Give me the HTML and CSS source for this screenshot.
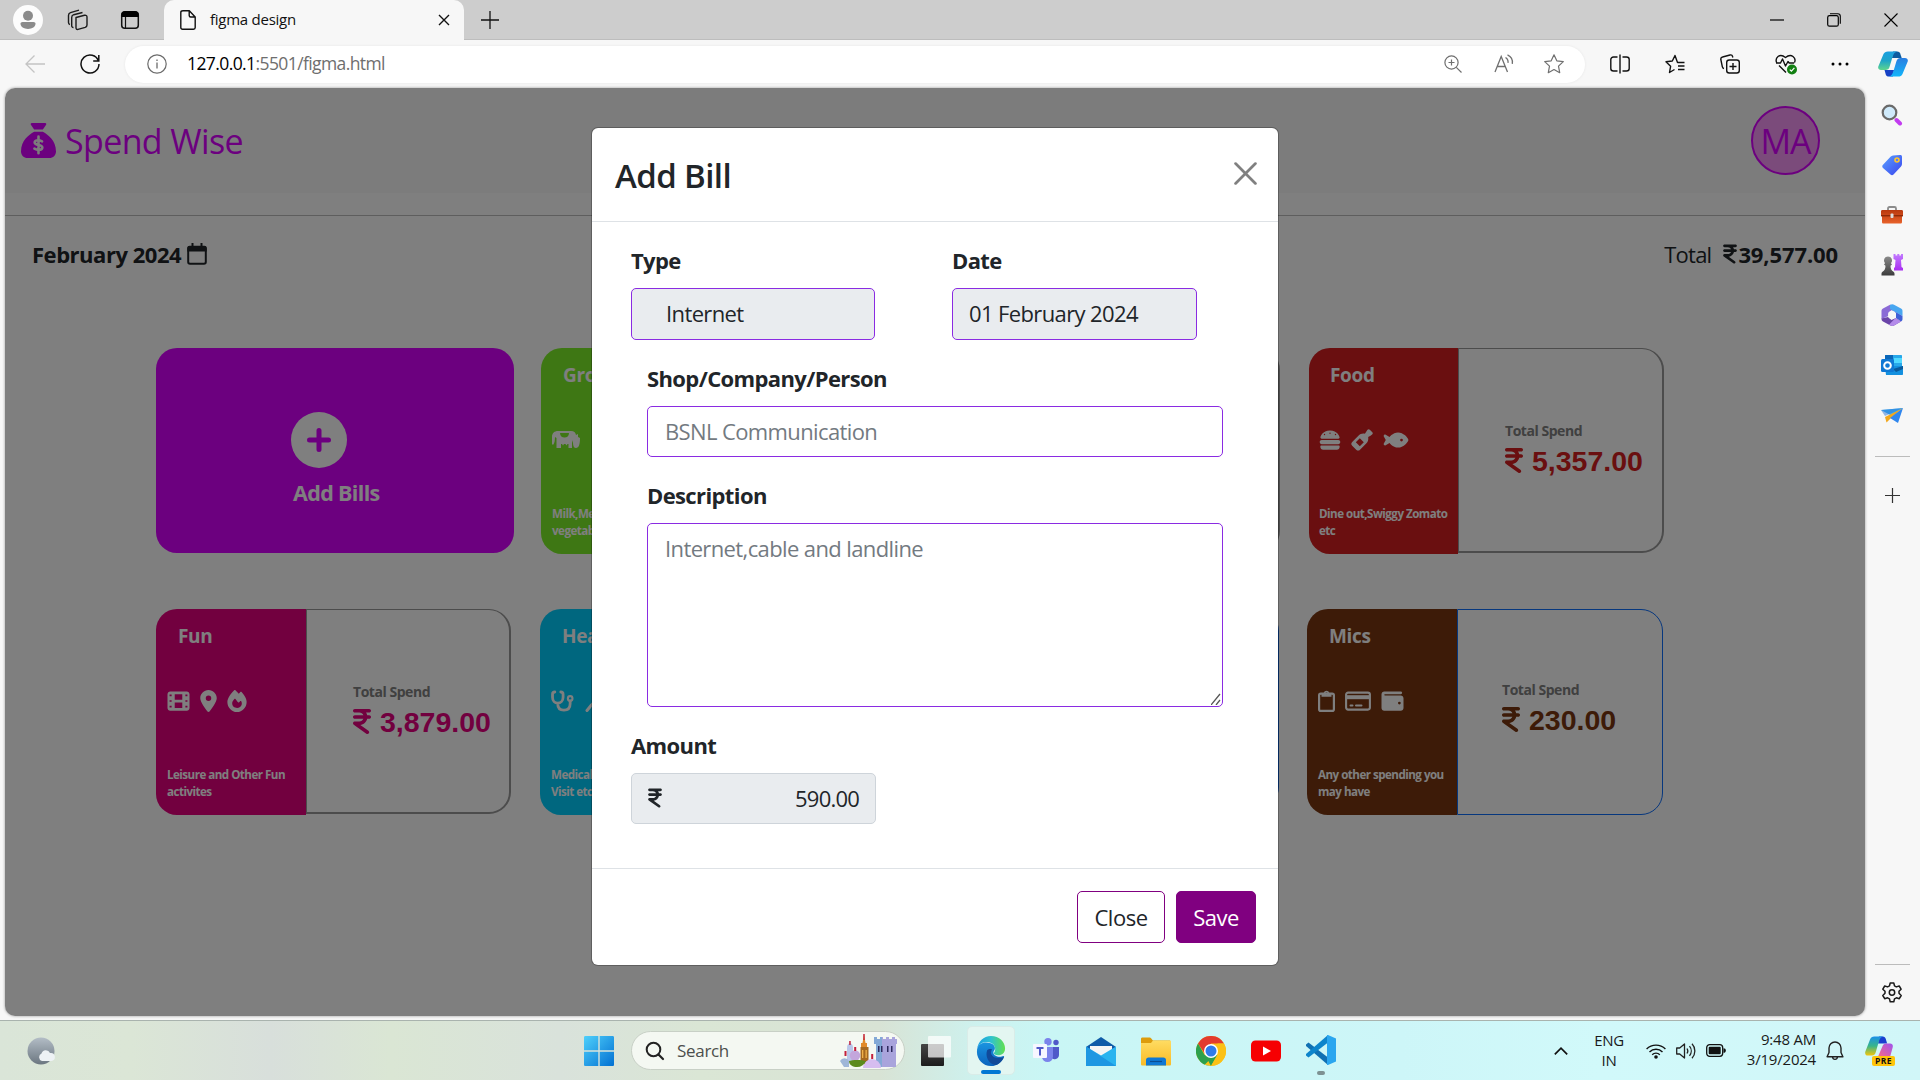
FILE: index.html
```html
<!DOCTYPE html>
<html lang="en">
<head>
<meta charset="utf-8">
<title>figma design</title>
<link rel="stylesheet" href="styles.css">
</head>
<body>
<svg class="defs" width="0" height="0">
  <defs>
    <symbol id="rupee" viewBox="0 0 320 512"><path fill="currentColor" d="M0 64C0 46.3 14.3 32 32 32H96h16H288c17.7 0 32 14.3 32 32s-14.3 32-32 32H231.8c9.6 14.4 16.7 30.6 20.7 48H288c17.7 0 32 14.3 32 32s-14.3 32-32 32H252.4c-13.2 58.3-61.9 103.2-122.2 110.9L274.6 422c14.4 10.3 17.7 30.3 7.4 44.6s-30.3 17.7-44.6 7.4L13.4 314C2.1 306-2.7 291.5 1.5 278.2S18.1 256 32 256h80c32.8 0 61-19.7 73.3-48H32c-17.7 0-32-14.3-32-32s14.3-32 32-32H185.3C173 115.7 144.8 96 112 96H96 32C14.3 96 0 81.7 0 64z"/></symbol>
    <linearGradient id="cpA" x1="0" y1="0" x2="0" y2="1"><stop offset="0" stop-color="#1a9fe0"/><stop offset=".5" stop-color="#1fa5c9"/><stop offset="1" stop-color="#5fd68c"/></linearGradient>
    <linearGradient id="cpB" x1="0" y1="0" x2="0" y2="1"><stop offset="0" stop-color="#2a7de0"/><stop offset="1" stop-color="#12b5fa"/></linearGradient>
    <linearGradient id="cpC" x1="0" y1="0" x2="0" y2="1"><stop offset="0" stop-color="#1a8fe8"/><stop offset=".5" stop-color="#37b58a"/><stop offset="1" stop-color="#f5c60a"/></linearGradient>
    <linearGradient id="cpD" x1="1" y1="0" x2="0" y2="1"><stop offset="0" stop-color="#a052ee"/><stop offset="1" stop-color="#f56a8a"/></linearGradient>
    <linearGradient id="tag" x1="0" y1="0" x2="1" y2="1"><stop offset="0" stop-color="#5aa2ff"/><stop offset="1" stop-color="#3a43ee"/></linearGradient>
    <linearGradient id="box" x1="0" y1="0" x2="0" y2="1"><stop offset="0" stop-color="#b9380e"/><stop offset="1" stop-color="#e8622a"/></linearGradient>
    <linearGradient id="pawn" x1="0" y1="0" x2="0" y2="1"><stop offset="0" stop-color="#8a8a8a"/><stop offset="1" stop-color="#3c3c3c"/></linearGradient>
    <linearGradient id="rook" x1="0" y1="0" x2="0" y2="1"><stop offset="0" stop-color="#c27bff"/><stop offset="1" stop-color="#a82df0"/></linearGradient>
    <linearGradient id="win" x1="0" y1="0" x2="1" y2="1"><stop offset="0" stop-color="#4fd0fb"/><stop offset="1" stop-color="#0270d2"/></linearGradient>
    <linearGradient id="moon" x1="0" y1="0" x2="0" y2="1"><stop offset="0" stop-color="#b3bdc6"/><stop offset="1" stop-color="#6b7680"/></linearGradient>
    <linearGradient id="edgeA" x1="0" y1="0" x2="1" y2="0"><stop offset="0" stop-color="#1b9de2"/><stop offset=".5" stop-color="#2fc2cf"/><stop offset="1" stop-color="#62e04e"/></linearGradient>
    <linearGradient id="edgeB" x1="0" y1="0" x2="0" y2="1"><stop offset="0" stop-color="#1a94e0"/><stop offset="1" stop-color="#0b63bd"/></linearGradient>
    <linearGradient id="folder" x1="0" y1="0" x2="0" y2="1"><stop offset="0" stop-color="#ffdc62"/><stop offset="1" stop-color="#f9bb26"/></linearGradient>
    <linearGradient id="dark" x1="0" y1="0" x2="0" y2="1"><stop offset="0" stop-color="#454545"/><stop offset="1" stop-color="#1c1c1c"/></linearGradient>
  </defs>
</svg>

<header class="tabstrip">
  <svg class="avatar" viewBox="0 0 30 30"><circle cx="15" cy="15" r="15" fill="#fcfcfc"/><circle cx="15" cy="10.700" r="5" fill="#8b8b8b"/><path fill="#8b8b8b" d="M9.500 17h11c1.200 0 2 .8 2 1.800 0 3-3.300 5.200-7.500 5.200S7.500 21.800 7.500 18.800c0-1 .8-1.800 2-1.800z"/></svg>
  <svg class="ico workspaces" viewBox="0 0 22 22"><g fill="none" stroke="#1c1c1c" stroke-width="1.400" stroke-linejoin="round"><path d="M9 8.500l8.500-2.200c1.300-.3 2.500.3 2.500 1.700v8c0 1.200-.7 2-1.800 2.400l-7.200 2c-1.300.3-2-.4-2-1.600z"/><path d="M6.500 18.500c-1 .1-1.800-.6-1.800-1.800V8.500c0-1.500.6-2.400 2-2.800L15.500 3.500"/><path d="M3 15.500c-.9-.2-1.500-.9-1.500-2V6.500c0-1.500.6-2.500 2-2.900L12 1.200"/></g></svg>
  <svg class="ico tabact" viewBox="0 0 20 20"><rect x="1.700" y="2" width="16.600" height="16.300" rx="3" fill="none" stroke="#111" stroke-width="1.500"/><path fill="#000" d="M1.500 7V4.500A3.500 3.500 0 0 1 5 1h10a3.500 3.500 0 0 1 3.500 3.500V7z"/><path d="M5.500 7v11" stroke="#111" stroke-width="1.200"/></svg>
  <div class="tab">
    <svg class="file" viewBox="0 0 16 20"><path fill="none" stroke="#111" stroke-width="1.400" stroke-linejoin="round" d="M3 .8h6.300L15.200 7v10.500c0 1-.7 1.700-1.700 1.700H2.500c-1 0-1.700-.7-1.700-1.700v-15C.8 1.500 1.500.8 3 .8zM9.200.8v4.700c0 1 .5 1.500 1.500 1.500h4.500"/></svg>
    <span class="tab-title">figma design</span>
    <svg class="tab-x" viewBox="0 0 12 12"><path stroke="#111" stroke-width="1.400" d="M1 1l10 10M11 1L1 11"/></svg>
  </div>
  <svg class="newtab" viewBox="0 0 18 18"><path stroke="#111" stroke-width="1.300" d="M9 0v18M0 9h18"/></svg>
  <div class="win">
    <svg viewBox="0 0 14 14"><path stroke="#000" stroke-width="1.200" d="M0 7h14"/></svg>
    <svg viewBox="0 0 14 14"><rect x=".7" y="2.600" width="10.600" height="10.600" rx="1.800" fill="none" stroke="#000" stroke-width="1.200"/><path fill="none" stroke="#000" stroke-width="1.100" d="M3 .7h7.800c1.500 0 2.500 1 2.500 2.500v7.500"/></svg>
    <svg viewBox="0 0 14 14"><path stroke="#000" stroke-width="1.100" d="M.5.500l13 13M13.500.500l-13 13"/></svg>
  </div>
</header>

<nav class="toolbar">
  <svg class="i20" viewBox="0 0 20 20"><path fill="none" stroke="#c4c4c4" stroke-width="1.300" d="M20 10H1M9.500 1.500L1 10l8.500 8.500"/></svg>
  <svg class="i20 reload" viewBox="0 0 20 20"><path fill="none" stroke="#111" stroke-width="1.500" d="M18.500 7A9 9 0 1 0 19 10M18.800 1v6h-5.600"/></svg>
  <div class="address">
    <svg class="i20" viewBox="0 0 20 20"><circle cx="10" cy="10" r="9.200" fill="none" stroke="#6b6b6b" stroke-width="1.200"/><path stroke="#6b6b6b" stroke-width="1.300" d="M10 8.500v6M10 5.400v1.600"/></svg>
    <span class="url"><b>127.0.0.1</b>:5501/figma.html</span>
    <svg class="i20 first" viewBox="0 0 20 20"><g fill="none" stroke="#6f6f6f" stroke-width="1.200"><circle cx="8.500" cy="8.500" r="6.600"/><path d="M13.300 13.300l5.200 5.200M8.500 5.500v6M5.500 8.500h6"/></g></svg>
    <svg class="i20 read" viewBox="0 0 20 20"><g fill="none" stroke="#6f6f6f" stroke-width="1.300"><path d="M1 18L7.200 2.500 13.500 18M3.300 12.500h8M11.500 3.500c2 1.200 2.800 3 2.500 5.300M13.500.8c3.800 1.700 5.400 5 4.800 9"/></g></svg>
    <svg class="i20 star" viewBox="0 0 20 20"><path fill="none" stroke="#6f6f6f" stroke-width="1.200" stroke-linejoin="round" d="M10 .8l2.800 6 6.500.8-4.800 4.500 1.200 6.600L10 15.500l-5.700 3.200 1.200-6.600L.7 7.600l6.500-.8z"/></svg>
  </div>
  <svg class="i20 t1" viewBox="0 0 20 20"><g fill="none" stroke="#111" stroke-width="1.400"><path d="M10 .5v19M7.500 3H3.500C2 3 .8 4 .8 5.500v9C.8 16 2 17 3.500 17h4M12.500 3h4c1.500 0 2.700 1 2.700 2.500v9c0 1.500-1.200 2.500-2.700 2.500h-4"/></g></svg>
  <svg class="i20 t2" viewBox="0 0 20 20"><path fill="none" stroke="#111" stroke-width="1.400" stroke-linejoin="round" d="M19.500 8.500h-7L10 1.500 7.300 7 1 7.800l4.600 4.500-1.100 6.200 5-3M13 12h6.500M13 15.500h6.500"/></svg>
  <svg class="i20 t2" viewBox="0 0 20 20"><g fill="none" stroke="#111" stroke-width="1.400"><rect x="6.700" y="6" width="12.600" height="13" rx="2.500"/><path d="M13 9v7M9.500 12.500h7M4 14.500c-1-.1-1.500-.8-1.700-1.800L.8 5.500C.6 4.200 1.200 3.300 2.500 3l7.500-2c1.300-.3 2.300.3 2.600 1.500l.3 1"/></g></svg>
  <svg class="i22 t2" viewBox="0 0 22 22"><path fill="none" stroke="#111" stroke-width="1.400" stroke-linejoin="round" d="M1.800 10C-.5 5 4.500-.5 10.500 4.500 16.500-.5 21.500 5 19.500 9.500M1 10h4.500l2-4 3 7 2.500-4.500 1.200 1.500h5M4 12.500l7 7"/><circle cx="17" cy="16.500" r="5" fill="#128012"/><path fill="none" stroke="#fff" stroke-width="1.200" d="M14.800 16.600l1.600 1.600 3-3.300"/></svg>
  <svg class="i20 t3" viewBox="0 0 20 20"><circle cx="3" cy="10" r="1.500"/><circle cx="10" cy="10" r="1.500"/><circle cx="17" cy="10" r="1.500"/></svg>
  <svg class="copilot" viewBox="0 0 30 30" preserveAspectRatio="none"><path fill="#0c5ba0" d="M15 .5h4c2 0 2.700 1 3.200 2.500l1.500 5H14z"/><path fill="#1641c5" d="M15 29.500h-4c-2 0-2.700-1-3.200-2.500L6.500 22H16z"/><path fill="url(#cpA)" d="M5.500 3.500C6.500 1.500 7.500.5 10 .5h9.500c-3 .5-4 3-5 6.500l-3 11.500c-.7 2.500-2 3.500-4 3.500H3c-2 0-3.300-1.500-2.700-4z"/><path fill="url(#cpB)" d="M24.500 26.500c-1 2-2 3-4.500 3h-9.500c3-.5 4-3 5-6.500l3-11.500c.7-2.500 2-3.500 4-3.500H27c2 0 3.300 1.500 2.700 4z"/></svg>
</nav>

<div class="main">
  <div class="page">
    <div class="pagehead">
      <svg class="sack" viewBox="0 0 512 512"><path fill="currentColor" d="M320 96H192L144.600 24.900C137.500 14.200 145.100 0 157.900 0H354.100c12.800 0 20.400 14.200 13.300 24.900L320 96zM192 128H320c3.800 2.500 8.100 5.300 13 8.400C389.700 172.700 512 250.900 512 416c0 53-43 96-96 96H96c-53 0-96-43-96-96C0 250.900 122.300 172.700 179 136.400c4.800-3.100 9.200-5.900 13-8.400z"/><path class="dollar" d="M256 200v242M308 268c-18-9-38-15-56-15-36 0-52 18-52 34 0 50 112 22 112 72 0 22-22 34-54 34-22 0-44-7-62-17"/></svg>
      <span class="brand">Spend Wise</span>
      <div class="initials">MA</div>
    </div>
    <hr class="rule">
    <div class="summary">
      <span class="month">February 2024</span>
      <svg class="cal" viewBox="0 0 20 22"><rect x="1.200" y="4" width="17.600" height="16.800" rx="1.800" fill="none" stroke="currentColor" stroke-width="2"/><path fill="currentColor" d="M.3 8.500V5A2.200 2.200 0 0 1 2.500 2.800h15A2.200 2.200 0 0 1 19.700 5v3.500zM4.500 0h2v4h-2zM13.500 0h2v4h-2z"/></svg>
      <span class="tot">Total</span>
      <svg class="rp22"><use href="#rupee"/></svg>
      <span class="totnum">39,577.00</span>
    </div>

    <div class="cards">
      <div class="card add">
        <svg class="plus" viewBox="0 0 56 56"><circle cx="28" cy="28" r="28" fill="#fff"/><path stroke="#d900ff" stroke-width="5" stroke-linecap="round" d="M28 18.500v19M18.500 28h19"/></svg>
        <span>Add Bills</span>
      </div>
      <div class="card">
        <div class="side green">
          <h4>Groceries</h4>
          <div class="icons"><svg class="w28" viewBox="0 0 28 22"><path fill="#fff" d="M0 15V8c0-4 2.500-6 6-6h13c3 0 4.500 1.500 5 4l2-1v3l2 1c0 6-1 10-4 10-2 0-3-2-3-5l-1-3v8h-3.500v-4h-1l-1 1.500-1-1.500h-1.500l-1 1.500-1-1.500H9v4H4.500V9L3 8c-.3 3 0 6-2 8z"/><path fill="#7cee28" d="M8 4h9c0 3-2 4.500-4.500 4.500S8 7 8 4z"/></svg><svg class="w22" viewBox="0 0 22 22"><circle cx="11" cy="11" r="9" fill="#fff"/></svg></div>
          <p>Milk,Meat and vegetables</p>
        </div>
        <div class="sum bevel"></div>
      </div>
      <div class="card">
        <div class="side violet"></div>
        <div class="sum bevel"></div>
      </div>
      <div class="card food">
        <div class="side red">
          <h4>Food</h4>
          <div class="icons"><svg class="w22" viewBox="0 0 512 512"><path fill="#fff" d="M61.100 224C45 224 32 211 32 194.900c0-1.900 .2-3.700 .6-5.600C37.900 168.300 78.800 32 256 32s218.100 136.300 223.400 157.300c.5 1.900 .6 3.700 .6 5.600c0 16.100-13 29.100-29.100 29.100H61.100zM144 128a16 16 0 1 0 -32 0 16 16 0 1 0 32 0zm240 16a16 16 0 1 0 0-32 16 16 0 1 0 0 32zM272 96a16 16 0 1 0 -32 0 16 16 0 1 0 32 0zM16 304c0-26.500 21.500-48 48-48H448c26.500 0 48 21.500 48 48s-21.500 48-48 48H64c-26.500 0-48-21.500-48-48zm16 96c0-8.800 7.200-16 16-16H464c8.800 0 16 7.200 16 16v16c0 35.300-28.700 64-64 64H96c-35.300 0-64-28.700-64-64V400z"/></svg><svg class="w22" viewBox="0 0 22 22"><path fill="#fff" fill-rule="evenodd" d="M16.500.8c.7-.8 1.600-.8 2.300 0l2.500 2.500c.7.700.6 1.700-.2 2.300l-1.600 1.200-2.300 1.200c.4 2.800-.3 4.800-2 6.500l-6.200 6.200c-1.200 1.200-2.600 1.200-3.800 0l-4-4c-1.200-1.200-1.200-2.600 0-3.800l6.200-6.200c1.700-1.700 3.700-2.400 6.500-2zM8.800 9.300l-4 4 4 4 4-4z"/></svg><svg class="w26" viewBox="0 0 576 512"><path fill="#fff" fill-rule="evenodd" d="M180.500 141.500C219.700 108.500 272.600 80 336 80s116.300 28.500 155.500 61.500c39.100 33 66.900 72.400 81 99.800c4.700 9.200 4.700 20.100 0 29.300c-14.100 27.400-41.900 66.800-81 99.800C452.300 403.500 399.400 432 336 432s-116.300-28.500-155.500-61.500c-16.200-13.700-30.500-28.500-42.700-43.100L48.100 379.600c-12.500 7.300-28.400 5.300-38.700-4.900S-3 348.700 4.200 336.100L50 256 4.200 175.900c-7.200-12.600-5-28.400 5.300-38.600s26.100-12.200 38.700-4.900l89.700 52.300c12.200-14.600 26.500-29.400 42.700-43.100zM448 256a32 32 0 1 0 -64 0 32 32 0 1 0 64 0z"/></svg></div>
          <p>Dine out,Swiggy Zomato etc</p>
        </div>
        <div class="sum bevel"><span class="ts">Total Spend</span><span class="amt c-red"><svg><use href="#rupee"/></svg>5,357.00</span></div>
      </div>
    </div>

    <div class="cards second">
      <div class="card">
        <div class="side pink">
          <h4>Fun</h4>
          <div class="icons"><svg class="w23" viewBox="0 0 512 512"><path fill="#fff" fill-rule="evenodd" d="M0 96C0 60.700 28.700 32 64 32H448c35.300 0 64 28.700 64 64V416c0 35.300-28.700 64-64 64H64c-35.300 0-64-28.700-64-64zM48 104v40h48v-40zM48 236v40h48v-40zM48 368v40h48v-40zM416 104v40h48v-40zM416 236v40h48v-40zM416 368v40h48v-40zM168 96v128h176V96zM168 288v128h176V288z"/></svg><svg class="w17" viewBox="0 0 384 512"><path fill="#fff" d="M215.700 499.200C267 435 384 279.400 384 192C384 86 298 0 192 0S0 86 0 192c0 87.400 117 243 168.300 307.200c12.300 15.300 35.100 15.300 47.400 0zM192 128a64 64 0 1 1 0 128 64 64 0 1 1 0-128z"/></svg><svg class="w20" viewBox="0 0 448 512"><path fill="#fff" d="M159.300 5.400c7.800-7.300 19.900-7.200 27.700 .1c27.600 25.900 53.500 53.800 77.700 84c11-14.400 23.500-30.100 37-42.900c7.900-7.400 20.100-7.400 28 .1c34.600 33 63.900 76.600 84.500 118c20.300 40.800 33.800 82.500 33.800 111.900C448 404.200 348.200 512 224 512C98.400 512 0 404.100 0 276.500c0-38.400 17.800-85.300 45.400-131.700C73.300 97.700 112.700 48.600 159.300 5.400zM225.700 416c25.300 0 47.700-7 68.800-21c42.100-29.400 53.400-88.200 28.100-134.400c-4.500-9-16-9.600-22.500-2l-25.200 29.300c-6.600 7.600-18.500 7.400-24.700-.5c-16.500-21-46-58.500-62.800-79.800c-6.300-8-18.300-8.100-24.700-.1c-33.800 42.500-50.800 69.300-50.800 99.400C112 375.400 162.600 416 225.700 416z"/></svg></div>
          <p>Leisure and Other Fun activites</p>
        </div>
        <div class="sum bevel"><span class="ts">Total Spend</span><span class="amt c-pink"><svg><use href="#rupee"/></svg>3,879.00</span></div>
      </div>
      <div class="card">
        <div class="side teal">
          <h4>Health</h4>
          <div class="icons"><svg class="w23" viewBox="0 0 24 22"><g fill="none" stroke="#fff" stroke-width="2.900" stroke-linecap="round"><path d="M4 1.600C2 1.600 1.600 3 1.600 4v3c0 4 2.500 6.200 5.400 6.200s5.600-2.200 5.600-6.200V4c0-1-.4-2.400-2.400-2.400M7 13.500c0 4.500 2.500 7 6.500 7s6.500-2.500 6.500-7V11"/><circle cx="20" cy="8.300" r="2.400" stroke-width="2.200"/></g></svg><svg class="w22" viewBox="0 0 22 22"><path stroke="#fff" stroke-width="3" stroke-linecap="round" d="M3 20.500l4-5 12-12"/></svg></div>
          <p>Medical,Hospital<br>Visit etc</p>
        </div>
        <div class="sum blue"></div>
      </div>
      <div class="card">
        <div class="side violet"></div>
        <div class="sum blue short"></div>
      </div>
      <div class="card last">
        <div class="side brown">
          <h4>Mics</h4>
          <div class="icons"><svg class="w17" viewBox="0 0 17 22"><rect x="1.100" y="3.600" width="14.800" height="17.300" rx="1.700" fill="none" stroke="#fff" stroke-width="2.200"/><path fill="#fff" fill-rule="evenodd" d="M3.500 3h2.200a2.900 2.900 0 0 1 5.600 0h2.200v3.700h-10zM8.500 2.200a1 1 0 1 0 0 2 1 1 0 0 0 0-2z"/></svg><svg class="w26" viewBox="0 0 26 22"><rect x="1.100" y="2.600" width="23.800" height="17" rx="2" fill="none" stroke="#fff" stroke-width="2.100"/><path stroke="#fff" d="M1 7.200h24" stroke-width="4"/><path stroke="#fff" stroke-width="2" stroke-linecap="round" d="M5.500 15.500h2M11 15.500h5.500"/></svg><svg class="w23" viewBox="0 0 512 512"><path fill="#fff" d="M64 32C28.700 32 0 60.700 0 96V416c0 35.300 28.700 64 64 64H448c35.300 0 64-28.700 64-64V192c0-35.300-28.700-64-64-64H80c-8.800 0-16-7.200-16-16s7.200-16 16-16H448c17.700 0 32-14.300 32-32s-14.300-32-32-32H64zM416 272a32 32 0 1 1 0 64 32 32 0 1 1 0-64z"/></svg></div>
          <p>Any other spending you may have</p>
        </div>
        <div class="sum blue"><span class="ts">Total Spend</span><span class="amt c-brown"><svg><use href="#rupee"/></svg>230.00</span></div>
      </div>
    </div>

    <div class="backdrop"></div>
    <section class="modal">
      <div class="mhead"><h2>Add Bill</h2><svg viewBox="0 0 22 22"><path stroke="#808080" stroke-width="2.600" stroke-linecap="round" d="M1.500 1.500l19 19M20.500 1.500l-19 19"/></svg></div>
      <div class="mbody">
        <div class="pair">
          <div class="field"><label>Type</label><div class="input off type">Internet</div></div>
          <div class="field"><label>Date</label><div class="input off date">01 February 2024</div></div>
        </div>
        <div class="field wide"><label>Shop/Company/Person</label><div class="input ph">BSNL Communication</div></div>
        <div class="field wide desc"><label>Description</label><div class="input ph area">Internet,cable and landline<svg class="grip" viewBox="0 0 10 12"><path stroke="#555" stroke-width="1.300" d="M0 12L9 1M5 12l4-5"/></svg></div></div>
        <div class="field amount"><label>Amount</label><div class="input off money"><svg><use href="#rupee"/></svg><span>590.00</span></div></div>
      </div>
      <div class="mfoot"><button class="btn close">Close</button><button class="btn save">Save</button></div>
    </section>
  </div>

  <aside class="sidebar">
    <svg viewBox="0 0 22 22"><path stroke="#c23cf0" stroke-width="4" stroke-linecap="round" d="M15.500 16l3.500 3.500"/><circle cx="8.500" cy="8.500" r="6.800" fill="#cfeafb" stroke="#6a6a6a" stroke-width="2.200"/></svg>
    <svg viewBox="0 0 22 22"><path fill="url(#tag)" d="M12 1.500l7-.5c1.500 0 2 .5 2 2v7c0 1-.3 1.800-1 2.500l-7.500 8c-1 1-2 1-3 0L2 14c-1-1-1-2.200 0-3.200L9.500 2.800c.7-.8 1.500-1.200 2.500-1.300z"/><circle cx="16" cy="6" r="2" fill="#5a7aff" stroke="#ffc62b" stroke-width="1.600"/></svg>
    <svg viewBox="0 0 22 22"><path fill="none" stroke="#8b8b8b" stroke-width="1.800" d="M7 6V4.500C7 3.500 7.500 3 8.500 3h5c1 0 1.500.5 1.500 1.500V6"/><path fill="url(#box)" d="M1.500 6h19c1 0 1.500.5 1.500 1.500V11l-1 1v6c0 1-.7 1.500-1.500 1.500h-17c-1 0-1.500-.5-1.500-1.500v-6l-1-1V7.500C0 6.500.5 6 1.500 6z"/><path fill="#8f2a08" d="M0 11h22v1.400H0z"/><rect x="9.500" y="9.500" width="3" height="4.500" rx="1" fill="#ddd"/></svg>
    <svg viewBox="0 0 22 22"><path fill="url(#rook)" d="M12.500 0h2v1.500h1.800V0h2v1.500h1.700V0h2v5l-2 1 .5 7 1.500 1v2.500h-9V14l1-1 .5-7-2-1z"/><path fill="url(#pawn)" d="M7 2.500a4 4 0 0 1 3 6.700l1 1.300-1.500 1.200c0 3 1 4.800 3 6 .8.500 1 1.200 1 2.300v1.500H.5V20c0-1.100.2-1.800 1-2.300 2-1.200 3-3 3-6L3 10.500l1-1.300a4 4 0 0 1 3-6.700z"/></svg>
    <svg viewBox="0 0 22 22"><path fill="#8a6ad6" d="M9.500.5L2 4.500C1 5 .5 6 .5 7v8l7-3V8.500L12 5z"/><path fill="#48a6f0" d="M9 1c1.500-1 3-1 4.500 0L20 4.500c1 .6 1.500 1.500 1.500 2.700V12L9 5z"/><path fill="#3f5fd6" d="M9 5l6.500 3.500 6 3.500v3c0 1.200-.5 2-1.500 2.600l-5-3.600V9z"/><path fill="#6a44a8" d="M.5 14.500C.5 16 1 17 2 17.600L9 21.300c1.500.8 3 .8 4.500 0l6.500-3.700-5.500-3.600-4 2-3.500-3z"/><path fill="#b48bea" d="M8 20.700l1 .6c1.500.8 3 .8 4.500 0l6.500-3.700-5.500-3.600z"/><circle cx="11" cy="11" r="3.900" fill="#f7f7f7"/></svg>
    <svg viewBox="0 0 22 22"><path fill="#28a8ea" d="M5 1h15c.6 0 1 .4 1 1v11H4V2c0-.6.4-1 1-1z"/><path fill="#0a66b8" d="M5 1h7v6H4V2c0-.6.4-1 1-1z"/><path fill="#50d9ff" d="M13 4h8v5h-8z"/><path fill="#1490df" d="M4 12h18v8c0 .6-.4 1-1 1H5z"/><path fill="#0a5a9c" d="M22 12v3l-7 3-3-3z"/><rect x="0" y="5" width="13" height="13" rx="1.500" fill="#0f78d4"/><circle cx="6.500" cy="11.500" r="3.300" fill="none" stroke="#fff" stroke-width="2"/></svg>
    <svg viewBox="0 0 22 22"><path fill="#3bb0f5" d="M0 6l22-2-11 8z"/><path fill="#f2a81d" d="M22 4L4 13l1.500 5.500L10 14z"/><path fill="#2f86ee" d="M22 4l-5 15-8-5z"/><path fill="#2c74d4" d="M0 6l4 6 18-8z" opacity=".5"/></svg>
    <div class="sep"></div>
    <svg class="addapp" viewBox="0 0 15 15"><path stroke="#333" stroke-width="1.200" d="M7.500 0v15M0 7.500h15"/></svg>
    <div class="sep low"></div>
    <svg class="gear" viewBox="0 0 22 22"><g fill="none" stroke="#1a1a1a" stroke-width="1.500" stroke-linejoin="round"><path d="M9.200 1h3.600l.7 2.900 1.800 1 2.900-.9 1.900 3.200-2.100 2v2.100l2.200 2.200-1.900 3.200-2.900-.9-1.900 1.100-.7 2.900H9.200l-.7-2.900-1.900-1.100-2.900.9-1.900-3.200L4 11.300V9.200l-2.200-2L3.700 4l2.900.9 1.900-1z"/><circle cx="11" cy="10.500" r="2.700"/></g></svg>
  </aside>
</div>

<footer class="taskbar">
  <svg class="weather" viewBox="0 0 28 28"><circle cx="14" cy="14" r="13.500" fill="url(#moon)"/><path fill="#eef2f5" d="M15 24a4 4 0 0 1-.5-7.500 4.500 4.500 0 0 1 8.500-.5 4 4 0 0 1 1.500 8z"/></svg>
  <svg class="start" viewBox="0 0 30 30"><path fill="url(#win)" d="M0 1.500C0 .5.500 0 1.500 0H14.300v14.300H0zM15.700 0h12.800C29.500 0 30 .5 30 1.500v12.800H15.700zM0 15.700h14.300V30H1.500C.5 30 0 29.500 0 28.500zM15.700 15.700H30v12.800c0 1-.5 1.500-1.500 1.500H15.700z"/></svg>
  <div class="search">
    <svg viewBox="0 0 20 20"><circle cx="8.500" cy="8.500" r="6.800" fill="none" stroke="#222" stroke-width="2"/><path stroke="#222" stroke-width="2.200" stroke-linecap="round" d="M13.500 13.500l4.500 4.500"/></svg>
    <span>Search</span>
    <svg class="castle" viewBox="0 0 59 34"><path fill="#a9a4dc" d="M35 3h3v2h3V3h3v2h3V3h3v2h3V3h3v2h2v5h-1v23H37V10h-2z"/><path fill="#83a9d6" d="M35 3h3v2h3V3h2v30h-6V10h-2z"/><path fill="#2d2a5e" d="M39 12h1.500v6H39zM42 12h1.500v6H42zM48 12h1.500v6H48zM52 12h1.500v6H52z"/><path fill="#e08a28" d="M23.500 9l1.500-9 1.500 9h1.500v6h-6V9z"/><path fill="#a5691f" d="M21.500 13h8v17h-8z"/><path fill="#f0b24a" d="M23 16h1.300v8H23zM26.500 16h1.300v8h-1.300z"/><path fill="#b9c6ea" d="M8 14c0-3 1-4 3-5 2 1 3 2 3 5v14H8z"/><circle cx="16" cy="21.500" r="5.200" fill="#c3a6dc"/><path fill="#d6bdf0" d="M24 34a9 9 0 0 1 18 0z"/><path fill="#9fb6d8" d="M1 27a5 5 0 0 1 9 0v6H5z"/><path fill="#5c8a1e" d="M10 27c3-1.500 13-1.500 17 0-2 4-5 6-9 6s-8-2-8-6z"/><path fill="#c2203c" d="M5.500 17h2v5h-2zM10.200 7h1.500v4h-1.500zM15.200 13h2v4h-2zM32.200 20h2v5h-2zM24.300 0h1.400v6h-1.400z"/></svg>
  </div>
  <svg class="tview" viewBox="0 0 30 30"><rect x="0" y="8" width="23" height="22" rx="1" fill="url(#dark)"/><rect x="7" y="0" width="23" height="21.500" rx="1" fill="#fff" opacity=".72"/></svg>
  <div class="active">
    <svg viewBox="0 0 30 32"><path fill="url(#edgeB)" d="M0 17C0 9 5 7 10 7c7 0 10 4 9 7-.5 1.500-1.500 2-1.500 3.500 0 3 4 5 8 4.500 1.500-.2 2.800-.8 3.500-.5-2 6-7 10.500-14 10.500C6.500 32 0 25 0 17z"/><path fill="#114a99" d="M11 15c-2.500 6 1 15 8.500 16 4.500-1.300 8-5 9.500-9-3 2-13 2.500-14-4 0-2 1-3 1-4-2-.5-4 0-5 1z"/><path fill="url(#edgeA)" d="M.2 14C1 6 7 0 15 0c9 0 15 6.500 15 13 0 5-3 7.500-7.500 7.500-3 0-4.500-1-4.500-2 0-1 1.500-1.500 1.500-4.500C19.500 9 15 6.500 10.500 6.500 5 6.500 1.500 9.500.2 14z"/></svg>
    <i></i>
  </div>
  <svg class="teams" viewBox="0 0 26 25"><circle cx="23" cy="4.500" r="2.700" fill="#5059c9"/><path fill="#5059c9" d="M18 9h8v8a4.500 4.500 0 0 1-8 2.500z"/><circle cx="15" cy="3.700" r="3.700" fill="#7b83eb"/><path fill="#7b83eb" d="M9 9h11v9.500a5.500 5.500 0 0 1-11 0z"/><rect x="0" y="6" width="14" height="14" rx="1" fill="#f6f6ff"/><path fill="#5059c9" d="M3.500 9h7v2H8v6.500H6V11H3.500z"/></svg>
  <svg class="app" viewBox="0 0 30 30"><path fill="#0f5ba8" d="M0 11L15 1l15 10v4H0z"/><path fill="#f5f5f5" d="M4 10h22v5l-11 6L4 15z"/><path fill="#2bb4ef" d="M0 10.500l15 9 15-9V30H0z"/><path fill="#1583d8" d="M0 10.500L30 30H0z" opacity=".6"/></svg>
  <svg class="app" viewBox="0 0 30 30"><path fill="#dd9c0c" d="M0 3c0-1 .5-1.500 1.500-1.500H9c1 0 2 2.500 3 3h17v5H0z"/><path fill="url(#folder)" d="M0 7h10l2-2.500h17c.7 0 1 .3 1 1V28c0 1-.5 1.500-1.500 1.500h-27C.5 29.500 0 29 0 28z"/><path fill="#0f78d4" d="M5 29.500V24c0-1.500 1-2.500 2.500-2.500h15c1.500 0 2.500 1 2.500 2.500v5.500z"/><path stroke="#0a4c92" stroke-width="1.200" d="M9 25.500h12"/></svg>
  <svg class="app" viewBox="0 0 30 30"><circle cx="15" cy="15" r="15" fill="#fbc116"/><path fill="#e33b2e" d="M2 7.500A15 15 0 0 1 28 7.500H15L9 18z"/><path fill="#2da04c" d="M2 7.500l6.500 11.300 6.500 3.700-6.300 6.200L15 30A15 15 0 0 1 2 7.500z"/><path fill="#2da04c" d="M15 30l6.500-11.200H9z"/><path fill="#fbc116" d="M15 30l6.500-11.200V7.500H28A15 15 0 0 1 15 30z"/><circle cx="15" cy="15" r="7" fill="#fff"/><circle cx="15" cy="15" r="5.500" fill="#2f7bea"/></svg>
  <svg class="app" viewBox="0 0 30 30"><rect x="0" y="4.500" width="30" height="21" rx="4.500" fill="#f60002"/><path fill="#fff" d="M12 10.500l8 4.500-8 4.500z"/></svg>
  <div class="vsc"><svg viewBox="0 0 30 30"><path fill="#1070b3" d="M0 9.500L2.500 7.500 22 22.500V30L0 11z"/><path fill="#0d84cb" d="M0 20.500l2.500 2L22 7.500V0L0 19z"/><path fill="#2aa6ef" d="M22 0l8 3.500v23L22 30c-1 0-1-.5-1-1V1c0-.5 0-1 1-1z"/></svg><i></i></div>
  <svg class="chev" viewBox="0 0 14 8"><path fill="none" stroke="#111" stroke-width="1.700" d="M.8 7.300L7 1.200l6.200 6.100"/></svg>
  <div class="lang">ENG<br>IN</div>
  <svg class="wifi" viewBox="0 0 20 16"><g fill="none" stroke="#111" stroke-width="1.400"><path d="M.6 6a13.300 13.300 0 0 1 18.800 0M3.500 9a9.200 9.200 0 0 1 13 0M6.200 11.700a5.400 5.400 0 0 1 7.600 0"/></g><circle cx="10" cy="14" r="1.800" fill="#111"/></svg>
  <svg class="vol" viewBox="0 0 20 18"><path fill="none" stroke="#222" stroke-width="1.300" stroke-linejoin="round" d="M.7 6h3L8.500 2v14l-4.800-4h-3zM11 6.500c1 1.500 1 3.500 0 5M13.500 4.200c2.300 2.800 2.300 6.800 0 9.600M16 1.800c3.800 4 3.800 10.400 0 14.400"/></svg>
  <svg class="bat" viewBox="0 0 20 13"><rect x=".7" y=".7" width="16" height="11.600" rx="3" fill="none" stroke="#111" stroke-width="1.300"/><rect x="2.700" y="2.700" width="12" height="7.600" rx="1" fill="#111"/><path fill="#111" d="M17.500 4.200c1.500 0 2.300.7 2.300 2.300s-.8 2.300-2.300 2.300z"/></svg>
  <div class="clock">9:48 AM<br>3/19/2024</div>
  <svg class="bell" viewBox="0 0 18 20"><path fill="none" stroke="#222" stroke-width="1.400" stroke-linejoin="round" d="M9 1a6 6 0 0 1 6 6v4.500l1.900 4.300H1.100L3 11.500V7a6 6 0 0 1 6-6zM6.500 16c.2 1.600 1.200 2.400 2.500 2.400s2.300-.8 2.500-2.400"/></svg>
  <div class="copre">
    <svg viewBox="0 0 30 30"><path fill="#1a3fd0" d="M15 .5h4c2 0 2.700 1 3.200 2.500l1.500 5H14z"/><path fill="url(#cpC)" d="M5.500 3.500C6.500 1.500 7.500.5 10 .5h9.500c-3 .5-4 3-5 6.500l-3 10.500c-.7 2.500-2 3.500-4 3.500H3c-2 0-3.300-1.500-2.700-4z"/><path fill="url(#cpD)" d="M14 22l4.500-10.500c.9-2.500 2-3.500 4-3.500H27c2 0 3.300 1.500 2.700 4L27 22z"/></svg>
    <b>PRE</b>
  </div>
</footer>
</body>
</html>
```
FILE: styles.css
```css
* { box-sizing: border-box; }
body { margin: 0; width: 1920px; height: 1080px; overflow: hidden; display: flex; flex-direction: column; font-family: "Open Sans", "Noto Sans", sans-serif; background: #f7f7f7; color: #212529; }
svg { display: block; flex: none; }
.defs { position: absolute; }

/* Browser chrome */
.tabstrip { height: 40px; flex: none; display: flex; align-items: center; background: #cdcdcd; border-bottom: 1px solid #bdbdbd; }
.avatar { width: 30px; height: 30px; margin-left: 13px; }
.workspaces { width: 22px; height: 22px; margin-left: 24px; }
.tabact { width: 20px; height: 20px; margin-left: 31px; }
.tab { width: 300px; height: 40px; margin: 1px 0 0 24px; padding: 0 14px 0 16px; display: flex; align-items: center; background: #f7f7f7; border-radius: 10px 10px 0 0; }
.file { width: 16px; height: 20px; }
.tab-title { margin: 0 0 2px 14px; font-size: 15px; letter-spacing: -0.017em; color: #111; }
.tab-x { width: 12px; height: 12px; margin-left: auto; }
.newtab { width: 18px; height: 18px; margin-left: 17px; }
.win { display: flex; gap: 43px; margin: 0 22px 0 auto; }
.win svg { width: 14px; height: 14px; }
.toolbar { height: 48px; flex: none; display: flex; align-items: center; padding-left: 25px; }
.i20 { width: 20px; height: 20px; }
.i22 { width: 22px; height: 22px; }
.reload { margin-left: 35px; }
.address { width: 1460px; height: 37px; margin-left: 25px; padding: 0 21px 0 22px; display: flex; align-items: center; border-radius: 19px; background: #fff; box-shadow: 0 0 3px rgba(0, 0, 0, .07); }
.url { margin: 0 0 2px 20px; font-size: 17.5px; letter-spacing: -0.034em; color: #6e6e6e; }
.url b { font-weight: 400; color: #000; }
.first { margin-left: auto; }
.read { margin-left: 31px; }
.star { margin-left: 30px; }
.t1 { margin-left: 25px; }
.t2 { margin-left: 35px; }
.t3 { margin-left: 33px; }
.copilot { width: 30px; height: 26px; margin-left: 28px; }

.main { height: 932px; flex: none; display: flex; padding-left: 5px; }
.page { position: relative; width: 1860px; height: 928px; overflow: hidden; border-radius: 10px; background: #fff; box-shadow: 0 0 3px rgba(0, 0, 0, .4); }

/* Spend Wise page */
.pagehead { height: 105px; padding: 0 45px 0 16px; display: flex; align-items: center; background: #f8f8f8; color: #d900ff; }
.sack { width: 35px; height: 35px; }
.dollar { fill: none; stroke: #f8f8f8; stroke-width: 38; stroke-linecap: round; }
.brand { margin: 0 0 0 9px; font-size: 34px; line-height: 50px; letter-spacing: -0.0185em; }
.initials { width: 69px; height: 69px; margin-left: auto; border: 2px solid #d900ff; border-radius: 50%; background: #f796f7; text-align: center; font-size: 34px; line-height: 66px; letter-spacing: -0.03em; }
.rule { margin: 22px 0 0; border: 0; height: 1px; background: #bcbcbc; }
.summary { height: 34px; margin-top: 21px; padding: 0 27px; display: flex; align-items: center; font-size: 22px; line-height: 34px; }
.month { font-weight: 700; letter-spacing: -0.0215em; }
.cal { width: 20px; height: 22px; margin-left: 6px; }
.tot { margin-left: auto; letter-spacing: -0.035em; }
.rp22 { width: 14px; height: 22px; margin: 0 1px 0 12px; }
.totnum { font-weight: 700; letter-spacing: -0.005em; }
.cards { display: grid; grid-template-columns: 385px 384px 384px 355px; margin: 77px 0 0 151px; height: 206px; }
.second { grid-template-columns: 384px 384px 383px 356px; margin-top: 55px; }
.card { display: flex; align-items: flex-start; width: 355px; }
.last { width: 356px; }
.add { width: 358px; height: 205px; border-radius: 21px; background: #d900ff; flex-direction: column; padding: 64px 0 0 135px; color: #fff; font-size: 21.5px; line-height: 30px; font-weight: 700; letter-spacing: -0.03em; }
.plus { width: 56px; height: 56px; }
.add span { margin: 10px 0 0 2px; }
.side { width: 150px; height: 206px; flex: none; padding: 13px 0 0 11px; border-radius: 21px 0 0 21px; color: #fff; }
.food .side { width: 149px; padding-left: 10px; }
.side h4 { margin: 0 0 0 11px; font-size: 19px; line-height: 28px; letter-spacing: -0.018em; }
.icons { display: flex; align-items: center; gap: 10px; height: 24px; margin-top: 39px; }
.icons svg { height: 22px; }
.w17 { width: 17px; } .w20 { width: 20px; } .w22 { width: 22px; } .w23 { width: 23px; } .w26 { width: 26px; } .w28 { width: 28px; }
.side p { margin: 53px 0 0; width: 136px; font-size: 11.6px; line-height: 17px; font-weight: 700; letter-spacing: -0.045em; }
.green { background: #7cee28; } .red { background: #d41e20; } .pink { background: #e4007e; } .teal { background: #00cefe; } .brown { background: #7a3610; } .violet { background: #8030d0; }
.sum { height: 205px; flex: 1; padding: 72px 0 0 46px; border-radius: 0 22px 22px 0; display: flex; flex-direction: column; }
.bevel { border: solid #989898; border-width: 1px 2px 2px 1px; }
.blue { height: 206px; border: 1px solid #0d6efd; padding: 70px 0 0 44px; }
.short { height: 200px; }
.ts { font-size: 14px; line-height: 20px; font-weight: 700; letter-spacing: -0.033em; color: #808080; }
.amt { display: flex; align-items: center; margin-top: 3px; font: 700 28.5px/35px "Liberation Sans", Arial, sans-serif; }
.amt svg { width: 18px; height: 29px; margin: 0 9px 3px 0; }
.c-red { color: #d41e20; } .c-pink { color: #e4007e; } .c-brown { color: #7a3610; }
.backdrop { position: absolute; inset: 0; background: rgba(0, 0, 0, .5); }

/* Dialog */
.modal { position: absolute; left: 587px; top: 40px; width: 686px; height: 837px; background: #fff; border-radius: 6px; box-shadow: 0 0 0 1px rgba(0, 0, 0, .25); }
.mhead { height: 94px; padding: 0 21px 0 23px; display: flex; justify-content: space-between; align-items: center; border-bottom: 1px solid #dee2e6; }
.mhead h2 { margin: 2px 0 0; font-size: 33px; line-height: 50px; font-weight: 600; letter-spacing: -0.018em; }
.mhead svg { width: 23px; height: 23px; margin-bottom: 2px; }
.mbody { height: 647px; padding: 22px 39px 0; display: flex; flex-direction: column; border-bottom: 1px solid #dee2e6; font-size: 22px; letter-spacing: -0.028em; }
.pair { display: flex; gap: 77px; }
.field label { display: block; line-height: 33px; margin-bottom: 11px; font-weight: 700; }
.input { height: 51px; border: 1px solid #8a2be2; border-radius: 5px; line-height: 49px; padding: 0 17px; white-space: nowrap; }
.off { background: #e9ecef; }
.type { width: 244px; height: 52px; padding-left: 34px; }
.date { width: 245px; height: 52px; padding-left: 16px; }
.ph { color: #737a81; }
.wide { width: 576px; margin: 22px 0 0 16px; }
.area { position: relative; height: 184px; }
.grip { position: absolute; right: 1px; bottom: 1px; width: 10px; height: 12px; }
.amount { width: 245px; margin-top: 22px; }
.money { display: flex; justify-content: space-between; align-items: center; border-color: #ced4da; padding: 0 16px; }
.money svg { width: 14px; height: 22px; margin-bottom: 1px; }
.money span { letter-spacing: -0.036em; }
.mfoot { display: flex; justify-content: flex-end; gap: 11px; padding: 22px 22px 0; }
.btn { height: 52px; padding: 0; border-radius: 5px; border: 1px solid #800080; font: 400 22px/46px "Open Sans", sans-serif; letter-spacing: -0.022em; }
.close { width: 88px; background: #fff; color: #212529; }
.save { width: 80px; background: #800080; color: #fff; }

.sidebar { width: 55px; display: flex; flex-direction: column; align-items: center; padding: 16px 1px 0 0; }
.sidebar svg { width: 22px; height: 22px; margin-bottom: 28px; }
.sidebar .sep { width: 35px; height: 1px; margin-top: 2px; background: #bcbcbc; }
.sidebar .addapp { width: 15px; height: 15px; margin: 31px 0 0; }
.sidebar .low { margin-top: 461px; }
.sidebar .gear { margin: 17px 0 0; }

/* Taskbar */
.taskbar { height: 60px; flex: none; display: flex; align-items: center; border-top: 1px solid #a9b3ae; background: linear-gradient(90deg, #dae5d8 0, #dbe6d6 130px, #d8dfdb 270px, #dae6d4 390px, #d9e2db 560px, #dae6d5 700px, #d8e3d5 880px, #cdf2ef 980px, #c9f6f5 1050px, #cdf6f8 1400px, #d1f9fa 1600px, #d1f6f8 1920px); color: #1a1a1a; }
.weather { width: 28px; height: 28px; margin-left: 27px; }
.start { width: 30px; height: 30px; margin-left: 529px; }
.search { width: 274px; height: 39px; margin-left: 17px; padding: 0 6px 0 13px; display: flex; align-items: center; border: 1px solid #c8d0c6; border-radius: 20px; background: #f4f8f2; font-size: 17px; letter-spacing: -0.018em; color: #4c4f4c; }
.search svg { width: 20px; height: 20px; }
.search span { margin-left: 12px; }
.search .castle { width: 59px; height: 34px; margin-left: auto; }
.tview { width: 30px; height: 30px; margin-left: 16px; }
.active { width: 48px; height: 49px; margin-left: 16px; display: flex; flex-direction: column; align-items: center; justify-content: space-between; padding-top: 9px; border-radius: 5px; border: 1px solid #d9ece8; background: #e3f6f1; }
.active svg { width: 30px; height: 30px; }
.active i { width: 20px; height: 4px; border-radius: 2px; background: #0078d4; }
.teams { width: 26px; height: 25px; margin-left: 18px; }
.app { width: 30px; height: 30px; margin-left: 25px; }
.teams + .app { margin-left: 27px; }
.vsc { width: 30px; height: 49px; margin-left: 25px; padding-top: 9px; display: flex; flex-direction: column; align-items: center; justify-content: space-between; }
.vsc svg { width: 30px; height: 30px; }
.vsc i { width: 8px; height: 4px; border-radius: 2px; background: #7d9192; }
.chev { width: 14px; height: 8px; margin-left: 218px; }
.lang { width: 40px; margin: 0 0 2px 21px; text-align: center; font-size: 15px; line-height: 20px; letter-spacing: -0.02em; }
.wifi { width: 20px; height: 16px; margin-left: 17px; }
.vol { width: 20px; height: 18px; margin-left: 10px; }
.bat { width: 20px; height: 13px; margin-left: 10px; }
.clock { width: 75px; margin: 0 0 4px 15px; text-align: right; font-size: 15px; line-height: 20px; letter-spacing: -0.014em; }
.bell { width: 18px; height: 20px; margin-left: 10px; }
.copre { position: relative; width: 30px; height: 30px; margin-left: 21px; }
.copre svg { width: 28px; height: 28px; }
.copre b { position: absolute; left: 7px; bottom: 0; width: 23px; height: 10px; border-radius: 2px; background: #ffc50a; color: #111; font-size: 8.5px; line-height: 10px; text-align: center; letter-spacing: .06em; }
```
